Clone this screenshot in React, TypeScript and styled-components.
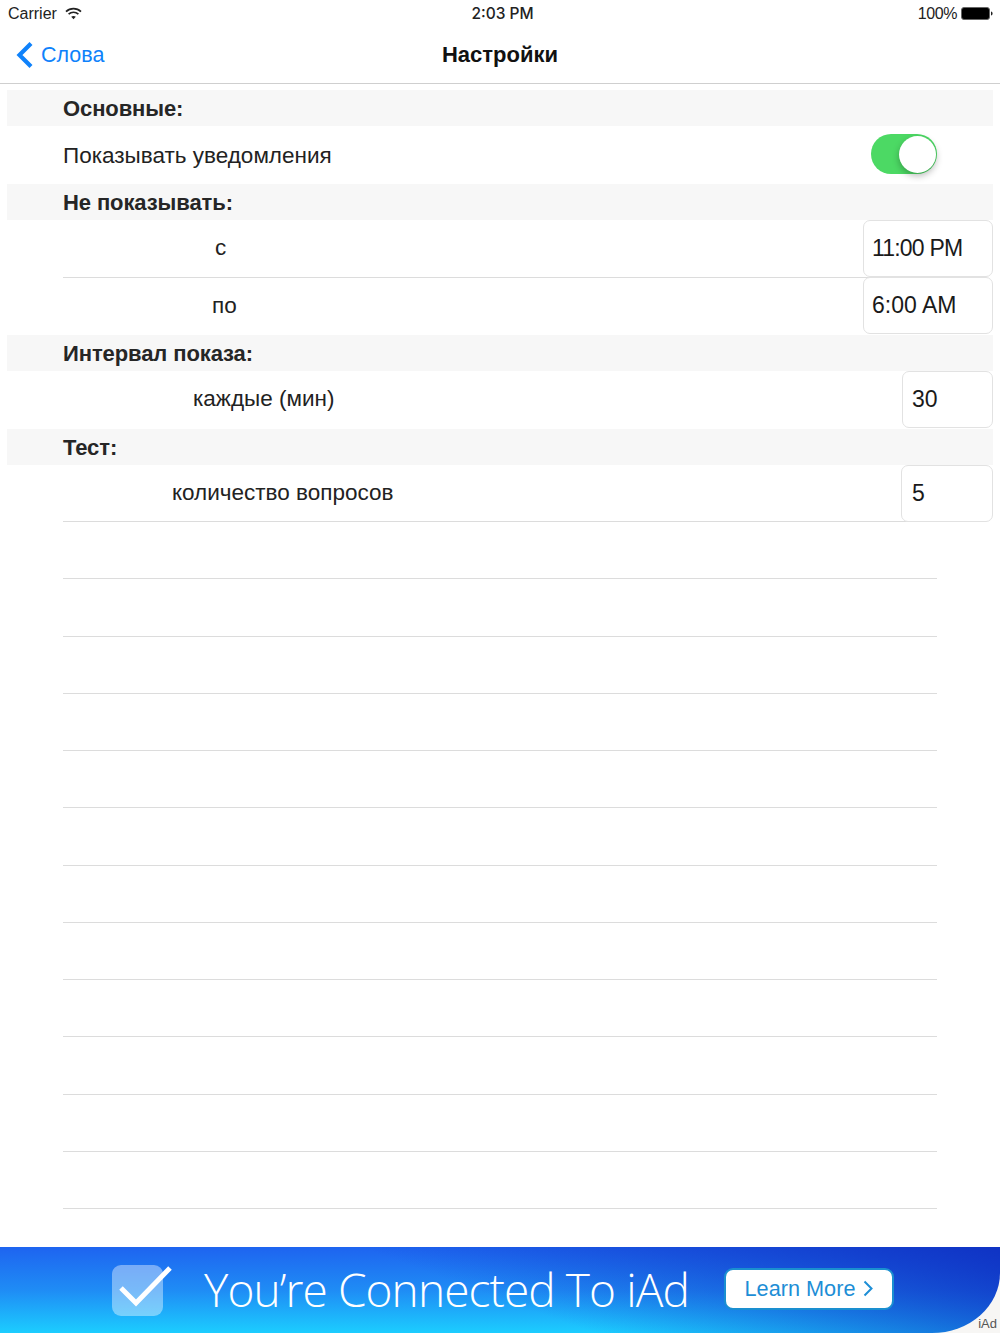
import React from "react";
import styled, { createGlobalStyle } from "styled-components";

const Global = createGlobalStyle`
  html, body { margin: 0; padding: 0; background: #fff; }
  body { font-family: "Liberation Sans", Arial, sans-serif; color: #1c1c1c; }
`;

const Page = styled.div`
  width: 1000px;
  height: 1333px;
  display: flex;
  flex-direction: column;
  overflow: hidden;
`;

const StatusBar = styled.div`
  height: 27px;
  display: grid;
  grid-template-columns: 1fr auto 1fr;
  align-items: center;
  padding: 0 7px 0 8px;
  font-size: 16px;
  color: #222;
`;
const StatusLeft = styled.div`
  display: flex;
  align-items: center;
  gap: 8px;
`;
const StatusTime = styled.div`
  font-family: Inter, "Liberation Sans", sans-serif;
  font-weight: 500;
  font-size: 15.5px;
  padding-left: 4px;
`;
const StatusRight = styled.div`
  display: flex;
  align-items: center;
  justify-content: flex-end;
  gap: 4px;
  font-size: 16px;
  letter-spacing: -0.4px;
`;

const NavBar = styled.div`
  height: 56px;
  position: relative;
  display: flex;
  align-items: center;
  justify-content: center;
  border-bottom: 1px solid #cfcfcf;
  box-sizing: content-box;
`;
const Back = styled.div`
  position: absolute;
  left: 16px;
  top: 14px;
  display: flex;
  align-items: center;
  gap: 7px;
  color: #0f82fb;
  font-size: 21.5px;
`;
const NavTitle = styled.div`
  font-size: 22px;
  font-weight: 700;
  color: #111;
`;

const Table = styled.div`
  margin: 6px 7px 0;
  display: flex;
  flex-direction: column;
  flex: 1;
`;
const SectionHeader = styled.div`
  height: 36px;
  line-height: 37px;
  background: #f7f7f7;
  padding-left: 56px;
  font-size: 22px;
  font-weight: 700;
  letter-spacing: -0.1px;
  color: #262626;
`;
const Row = styled.div<{ $h?: number; $plain?: boolean }>`
  height: ${(p) => p.$h ?? 57.25}px;
  box-sizing: border-box;
  margin: 0 56px;
  display: flex;
  align-items: center;
  justify-content: space-between;
  font-size: 22.5px;
  color: #222;
  border-bottom: ${(p) => (p.$plain ? "none" : "1px solid #dcdcdc")};
`;
const Label = styled.div<{ $indent?: number; $up?: number }>`
  padding-left: ${(p) => p.$indent ?? 0}px;
  margin-bottom: ${(p) => p.$up ?? 0}px;
`;
const Field = styled.div<{ $w: number; $inset?: number; $track?: number; $overlap?: boolean }>`
  width: ${(p) => p.$w}px;
  height: 57px;
  margin-right: -56px;
  margin-top: ${(p) => (p.$overlap ? -1 : 0)}px;
  align-self: flex-start;
  box-sizing: border-box;
  flex: none;
  border: 1px solid #e2e2e2;
  border-radius: 7px;
  background: #fff;
  padding-left: ${(p) => p.$inset ?? 8}px;
  line-height: 54px;
  font-size: 23px;
  letter-spacing: ${(p) => p.$track ?? 0}px;
  color: #1a1a1a;
`;
const Toggle = styled.div`
  width: 66px;
  height: 40px;
  margin-bottom: 2px;
  border-radius: 20px;
  background: #4cd964;
  position: relative;
  flex: none;
`;
const Knob = styled.div`
  position: absolute;
  right: 1px;
  top: 2px;
  width: 37px;
  height: 37px;
  border-radius: 50%;
  background: #fff;
  box-shadow: 0 3px 7px rgba(0, 0, 0, 0.28);
`;

const Ad = styled.div`
  height: 86px;
  flex: none;
  background: #f7f6f4;
  position: relative;
  overflow: hidden;
`;
const AdBanner = styled.div`
  height: 86px;
  display: flex;
  align-items: center;
  padding-left: 112px;
  border-bottom-right-radius: 68px 60px;
  background:
    linear-gradient(200deg, rgba(15, 50, 195, 0.98) 0%, rgba(15, 50, 195, 0) 52%),
    linear-gradient(180deg, #1e64f0 0%, #1f8cf5 50%, #1ccdff 100%);
  box-sizing: border-box;
  color: #fff;
`;
const AdIcon = styled.div`
  width: 51px;
  height: 51px;
  border-radius: 9px;
  background: rgba(255, 255, 255, 0.4);
  position: relative;
  flex: none;
`;
const AdCheck = styled.svg`
  position: absolute;
  left: 7px;
  top: 1px;
`;
const AdText = styled.div`
  margin-left: 41px;
  margin-bottom: 3px;
  font-family: "Open Sans", sans-serif;
  font-weight: 300;
  font-size: 46px;
  letter-spacing: -0.9px;
  white-space: nowrap;
  width: 520px;
  flex: none;
`;
const LearnMore = styled.div`
  width: 170px;
  height: 42px;
  margin-bottom: 3px;
  flex: none;
  box-sizing: border-box;
  border: 2px solid #1a8fd0;
  border-radius: 9px;
  background: #fff;
  color: #1d8ed6;
  font-size: 21.7px;
  display: flex;
  align-items: center;
  justify-content: center;
  gap: 8px;
`;
const AdTag = styled.div`
  position: absolute;
  right: 3px;
  bottom: 2px;
  font-size: 13px;
  color: #555;
`;

const lines = Array.from({ length: 12 }, (_, i) => i);

export default function App() {
  return (
    <Page>
      <Global />
      <StatusBar>
        <StatusLeft>
          Carrier
          <svg width="17" height="13" viewBox="0 0 17 13">
            <path d="M1 4.6C5.2.6 11.8.6 16 4.6" fill="none" stroke="#222" strokeWidth="1.7" />
            <path d="M3.6 7.2c2.8-2.6 7-2.6 9.8 0" fill="none" stroke="#222" strokeWidth="1.7" />
            <path d="M6.2 9.7c1.3-1.1 3.3-1.1 4.6 0L8.5 12.3z" fill="#222" />
          </svg>
        </StatusLeft>
        <StatusTime>2:03 PM</StatusTime>
        <StatusRight>
          100%
          <svg width="32" height="13" viewBox="0 0 32 13">
            <rect x="0.5" y="0.5" width="28" height="12" rx="2.5" fill="#000" stroke="#666" />
            <path d="M30 4.5c1 .2 1.6 1 1.6 2s-.6 1.8-1.6 2z" fill="#222" />
          </svg>
        </StatusRight>
      </StatusBar>
      <NavBar>
        <Back>
          <svg width="18" height="28" viewBox="0 0 18 28">
            <path d="M15 2.5 3.5 14 15 25.5" fill="none" stroke="#0f82fb" strokeWidth="4.2" />
          </svg>
          Слова
        </Back>
        <NavTitle>Настройки</NavTitle>
      </NavBar>
      <Table>
        <SectionHeader>Основные:</SectionHeader>
        <Row $h={58} $plain>
          <Label $up={-2}>Показывать уведомления</Label>
          <Toggle>
            <Knob />
          </Toggle>
        </Row>
        <SectionHeader>Не показывать:</SectionHeader>
        <Row $h={58}>
          <Label $indent={152} $up={1}>с</Label>
          <Field $w={130} $track={-0.8}>11:00 PM</Field>
        </Row>
        <Row $h={57} $plain>
          <Label $indent={149} $up={2}>по</Label>
          <Field $w={130} $overlap>6:00 AM</Field>
        </Row>
        <SectionHeader>Интервал показа:</SectionHeader>
        <Row $h={58} $plain>
          <Label $indent={130} $up={2}>каждые (мин)</Label>
          <Field $w={91} $inset={9}>30</Field>
        </Row>
        <SectionHeader>Тест:</SectionHeader>
        <Row $h={57}>
          <Label $indent={109}>количество вопросов</Label>
          <Field $w={92} $inset={10}>5</Field>
        </Row>
        {lines.map((i) => (
          <Row key={i} />
        ))}
      </Table>
      <Ad>
        <AdBanner>
          <AdIcon>
            <AdCheck width="54" height="42" viewBox="0 0 54 42">
              <path d="M2 22 17 37 51 2" fill="none" stroke="#fff" strokeWidth="5" />
            </AdCheck>
          </AdIcon>
          <AdText>You’re Connected To iAd</AdText>
          <LearnMore>
            Learn More
            <svg width="10" height="17" viewBox="0 0 10 17">
              <path d="M1.5 1.5 8.5 8.5 1.5 15.5" fill="none" stroke="#1d8ed6" strokeWidth="2" />
            </svg>
          </LearnMore>
        </AdBanner>
        <AdTag>iAd</AdTag>
      </Ad>
    </Page>
  );
}
